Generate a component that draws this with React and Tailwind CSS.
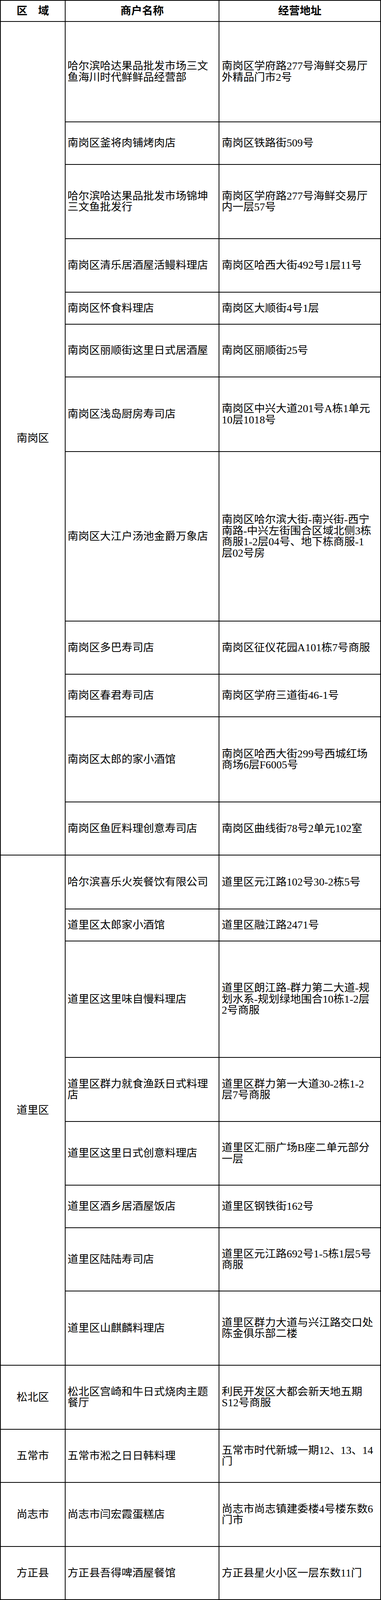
import React from 'react';

// 区域 -> list of [商户名称, 经营地址]
const groups = [
  {
    area: '南岗区',
    span: 'row-span-12',
    items: [
      ['哈尔滨哈达果品批发市场三文鱼海川时代鲜鲜品经营部', '南岗区学府路277号海鲜交易厅外精品门市2号'],
      ['南岗区釜将肉铺烤肉店', '南岗区铁路街509号'],
      ['哈尔滨哈达果品批发市场锦坤三文鱼批发行', '南岗区学府路277号海鲜交易厅内一层57号'],
      ['南岗区清乐居酒屋活鳗料理店', '南岗区哈西大街492号1层11号'],
      ['南岗区怀食料理店', '南岗区大顺街4号1层'],
      ['南岗区丽顺街这里日式居酒屋', '南岗区丽顺街25号'],
      ['南岗区浅岛厨房寿司店', '南岗区中兴大道201号A栋1单元10层1018号'],
      ['南岗区大江户汤池金爵万象店', '南岗区哈尔滨大街-南兴街-西宁南路-中兴左街围合区域北侧3栋商服1-2层04号、地下栋商服-1层02号房'],
      ['南岗区多巴寿司店', '南岗区征仪花园A101栋7号商服'],
      ['南岗区春君寿司店', '南岗区学府三道街46-1号'],
      ['南岗区太郎的家小酒馆', '南岗区哈西大街299号西城红场商场6层F6005号'],
      ['南岗区鱼匠料理创意寿司店', '南岗区曲线街78号2单元102室'],
    ],
  },
  {
    area: '道里区',
    span: 'row-span-8',
    items: [
      ['哈尔滨喜乐火炭餐饮有限公司', '道里区元江路102号30-2栋5号'],
      ['道里区太郎家小酒馆', '道里区融江路2471号'],
      ['道里区这里味自慢料理店', '道里区朗江路-群力第二大道-规划水系-规划绿地围合10栋1-2层2号商服'],
      ['道里区群力就食渔跃日式料理店', '道里区群力第一大道30-2栋1-2层7号商服'],
      ['道里区这里日式创意料理店', '道里区汇丽广场B座二单元部分一层'],
      ['道里区酒乡居酒屋饭店', '道里区钢铁街162号'],
      ['道里区陆陆寿司店', '道里区元江路692号1-5栋1层5号商服'],
      ['道里区山麒麟料理店', '道里区群力大道与兴江路交口处陈金俱乐部二楼'],
    ],
  },
  { area: '松北区', span: 'row-span-1', items: [['松北区宫崎和牛日式烧肉主题餐厅', '利民开发区大都会新天地五期S12号商服']] },
  { area: '五常市', span: 'row-span-1', items: [['五常市淞之日日韩料理', '五常市时代新城一期12、13、14门']] },
  { area: '尚志市', span: 'row-span-1', items: [['尚志市闫宏霞蛋糕店', '尚志市尚志镇建委楼4号楼东数6门市']] },
  { area: '方正县', span: 'row-span-1', items: [['方正县吾得啤酒屋餐馆', '方正县星火小区一层东数11门']] },
];

const cell = 'flex items-center border-r-2 border-b-2 border-black';

// the browser window tops out at 4096px, so row heights are the reference's scaled by 4096/5294
export default function App() {
  return (
    <div className="w-[976px] bg-white text-black text-[27.7px] leading-[28.5px] font-['Liberation_Serif','Noto_Sans_CJK_SC',serif]">
      <div className="grid grid-cols-[166px_394px_414px] grid-rows-[54px_257px_109px_190px_137px_82px_135px_191px_434px_136px_109px_218px_136px_138px_82px_298px_164px_163px_109px_162px_190px_164px_136px_164px_136px] border-l-2 border-t-2 border-black">
        <div className={`${cell} justify-center font-bold`}>区　域</div>
        <div className={`${cell} justify-center font-bold`}>商户名称</div>
        <div className={`${cell} justify-center font-bold`}>经营地址</div>

        {groups.map((group) => (
          <React.Fragment key={group.area}>
            <div className={`${cell} ${group.span} col-start-1 justify-center`}>{group.area}</div>
            {group.items.map(([name, address]) => (
              <React.Fragment key={name}>
                <div className={`${cell} col-start-2 pl-[5px] pr-[10px]`}>
                  <span>{name}</span>
                </div>
                <div className={`${cell} col-start-3 pl-[6px] pr-[16px]`}>
                  <span>{address}</span>
                </div>
              </React.Fragment>
            ))}
          </React.Fragment>
        ))}
      </div>
    </div>
  );
}
